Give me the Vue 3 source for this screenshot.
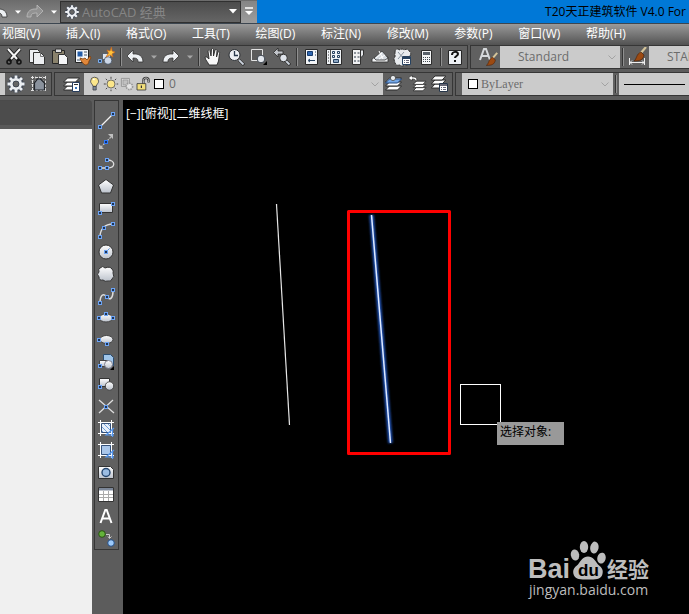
<script setup>
import { ref } from 'vue'

const menus = ['视图(V)', '插入(I)', '格式(O)', '工具(T)', '绘图(D)', '标注(N)', '修改(M)', '参数(P)', '窗口(W)', '帮助(H)']

const node = (x, y) => `<rect x="${x - 1.5}" y="${y - 1.5}" width="3" height="3" fill="#1d3557" stroke="#6da4f5"/>`
const teeth = [0, 45, 90, 135].map(a => `<path d="M10 1.500v17" transform="rotate(${a} 10 10)"/>`).join('')
const gear = `<g fill="none"><g stroke="#3a4250" stroke-width="4.600">${teeth}</g><circle cx="10" cy="10" r="5" stroke="#3a4250" stroke-width="4"/><g stroke="#eceff3" stroke-width="2.800" stroke-dasharray="3 10.500 3.500">${teeth}</g><circle cx="10" cy="10" r="4.600" stroke="#eceff3" stroke-width="3"/></g><circle cx="10" cy="10" r="3" fill="#656565" stroke="#3a4250" stroke-width=".8"/>`
const layers = '<g fill="#fff" stroke="#292929" stroke-width="1"><path d="M1.500 16l4-4h12l-4 4z"/><path d="M1.500 12l4-4h12l-4 4z"/><path d="M1.500 8l4-4h12l-4 4z"/></g>'
const brush = '<path d="M18 2l-6 7" stroke="#d4c49a" stroke-width="2.200"/><path d="M13 7l3 3c-1 5-4 6-10 6 3-2 2-7 7-9z" fill="#9c4a12" stroke="#4c240c" stroke-width=".7"/>'
const lens = '<path d="M13 13l5 5" stroke="#222" stroke-width="3"/><path d="M13 13l4.500 4.500" stroke="#cbd2dc" stroke-width="1.800"/>'

const icons = {
  gear,
  cut: '<path d="M4 2l11 12M16 2L5 14" stroke="#1f1f1f" stroke-width="4"/><path d="M4 2l9 10M16 2L7 12" stroke="#f4f4f4" stroke-width="2"/><g fill="none" stroke="#151515" stroke-width="1.600"><circle cx="5" cy="15" r="2"/><circle cx="15" cy="15" r="2"/></g>',
  copy: '<g fill="#eceef1" stroke="#333" stroke-width="1"><path d="M2.500 2.500h8l2 2v11h-10z"/><path d="M6.500 5.500h7l4 4v8h-11z"/></g><path d="M13.500 5.500v4h4" fill="none" stroke="#777"/>',
  paste: '<path d="M2.500 3.500h12v13h-12z" fill="#8a826c" stroke="#262626"/><path d="M5.500 2h6v3.500h-6z" fill="#ddd" stroke="#333"/><path d="M8.500 7.500h6l3 3v7h-9z" fill="#f4f5f7" stroke="#333"/>',
  match: '<path d="M2.500 2.500h13v13h-13z" fill="#f2f4f7" stroke="#222"/><path d="M4.500 4.500h5v5h-5z" fill="#235ca8"/><path d="M11 5h3M11 8h3M4 13h3" stroke="#456"/><path d="M7 11l3 1 2-1 2 2 3-4 1 2-2 3c0 3-2 4-4 4-2-2-4-3-5-7z" fill="#e0873a" stroke="#7b3d0b" stroke-width=".8"/>',
  block: '<path d="M6.500 6.500h8v6h-8z" fill="#dfe5ee" stroke="#384659" stroke-width=".7"/><circle cx="12" cy="13.500" r="3.800" fill="#ccd7e7" stroke="#384659" stroke-width=".7"/><path d="M2.500 12.500h3v3h-3z" fill="#24466f" stroke="#7daeee"/><path d="M15.500 0l.5 4 3 1-3 2 1 3-3-2-4 2 2.500-4-1.500-3 3 1z" fill="#ffc43c" stroke="#c8661c" stroke-width=".7"/>',
  undo: '<path d="M8 3v4c6-.5 10 2 10 8h-5c0-3-1-4-5-4v4L2 9z" fill="#edf0f3" stroke="#333" stroke-width=".8"/>',
  redo: '<path d="M12 3v4C6 6.500 2 9 2 15h5c0-3 1-4 5-4v4l6-6z" fill="#edf0f3" stroke="#333" stroke-width=".8"/>',
  redoOff: '<path d="M12 3v4C6 6.500 2 9 2 15h4c0-3 1-4 6-4v4l6-6z" fill="#929292" stroke="#bcbcbc" stroke-width=".8"/>',
  drop: '<path d="M7 8.500h6l-3 3.200z" fill="#a6a6a6"/>',
  dropOn: '<path d="M7 8.500h6l-3 3.200z" fill="#fff"/>',
  hand: '<path d="M6 18c-1-3-4-5-4-8 1-1 3 1 4 2L5 4c1-2 2-1 2 0l1 5 .5-7c1-1 2-.5 2 .5V9L12 3c1-1 2-.5 2 .5L13.500 10l1.500-5c1-1 2 0 1.500 1.500L15.500 14 14 18z" fill="#f7f7f7" stroke="#292929" stroke-width=".9"/>',
  zoomTime: lens + '<circle cx="8.500" cy="8" r="5.500" fill="#edf0f4" stroke="#2c3034"/><path d="M8.500 4v4.500H12" fill="none" stroke="#28394c" stroke-width="1.300"/>',
  zoomWin: '<path d="M2.500 2.500h11v11h-11z" fill="#5b5b5b" stroke="#e3e3e3"/><circle cx="12" cy="12" r="3.800" fill="#e2e6ec" stroke="#3e4650"/><path d="M18 14v4h-4z" fill="#000"/>',
  zoomPrev: lens + '<circle cx="11.500" cy="11" r="3.800" fill="#dfe4eb" stroke="#333"/><path d="M6 1v3h5v3H6v3L1.500 5.500z" fill="#c2c5ca" stroke="#292929" stroke-width=".8"/>',
  props: '<path d="M4.500 2.500h12v15h-12z" fill="#f3f5f7" stroke="#282828"/><path d="M6.500 4.500h5v4h-5z" fill="#2f66b0" stroke="#173b6c"/><path d="M14 5h1M14 8h1M8 13.500h6M9 12l-2 1.500L9 15" stroke="#26415f" fill="none"/>',
  center: '<path d="M2.500 2.500h15v15h-15z" fill="#eff2f5" stroke="#282828"/><path d="M6.500 3v14" stroke="#555"/><path d="M4 5h1M4 8h1M4 11h1M4 14h1" stroke="#333"/><g fill="none" stroke="#25405f"><path d="M8.500 4.500h2v2h-2zM13.500 4.500h2v2h-2zM8.500 8.500h2v2h-2zM13.500 8.500h2v2h-2z"/><path d="M9.500 12.500h5v3h-5z" fill="#8ba5c2"/></g>',
  palette: '<path d="M5.500 2.500h8v15h-8z" fill="#f0f1f3" stroke="#303030"/><path d="M13.500 3h3v5l-3 3z" fill="#e2e5e9" stroke="#303030"/><path d="M7 5h2v2H7zM7 9h2v2H7zM7 13h2v2H7zM10.500 5h2v2h-2zM10.500 9h2v2h-2zM10.500 13h2v2h-2z" fill="#8b929a"/>',
  sheet: '<path d="M2 12l3-2h13v5H2z" fill="#f0f2f4" stroke="#333" stroke-width=".8"/><path d="M4 11l8-7 6 7-3 2H6z" fill="#d4d9df" stroke="#333" stroke-width=".8"/><path d="M6 11l6-5M9 12l6-4M9 4l4 8" stroke="#fff"/>',
  markup: '<path d="M2 5q0-3 3-3l2 1q2-2 4 0 4-2 5 1 3 2 1 5v6q-2 4-5 3-3 2-5 0-5 1-5-3-2-3 0-5z" fill="#e8ebee" stroke="#333" stroke-dasharray="3 1"/><path d="M5 5l6 7M11 5l-6 7" stroke="#88939f"/><path d="M9.500 9.500h8v8h-8z" fill="#fff" stroke="#26415f"/><path d="M10 11h7" stroke="#26415f" stroke-width="2"/><path d="M11 13.500h5M11 15.500h5" stroke="#667" stroke-dasharray="1 1 3"/>',
  calc: '<path d="M5.500 3.500h10v14h-10z" fill="#f4f5f6" stroke="#2b2b2b"/><path d="M7 5h7v3H7z" fill="#59616a"/><path d="M7 10.500h7M7 12.500h7M7 14.500h7" stroke="#404850" stroke-dasharray="1 1"/>',
  help: '<path d="M3.500 3.500h13v14h-13z" fill="#edf0f4" stroke="#252525"/><path d="M7 8c0-4 6-4 6-1 0 2-3 2-3 4" fill="none" stroke="#111" stroke-width="2"/><path d="M9 13h2v2H9z" fill="#111"/>',
  textStyle: '<path d="M2 13L6 2h2l4 11M4 9h6" fill="none" stroke="#d6d9dc" stroke-width="2"/><g transform="translate(3 4) scale(.9)">' + brush + '</g>',
  dimStyle: '<g transform="translate(1 -2)">' + brush + '</g><path d="M2.500 11v7M17.500 11v7M3 15.500h14M5 13.500l-2 2 2 2M15 13.500l2 2-2 2" fill="none" stroke="#eee"/>',
  snap: '<path d="M2 3.500h16M2 16.500h16M3.500 2v16M16.500 2v16" stroke="#e2e2e2" stroke-dasharray="3 1"/><path d="M2 6.500h16M2 10.500h16M6.500 2v16M10.500 2v16M13.500 2v16" stroke="#8c8c8c" stroke-dasharray="1 1"/><path d="M5.500 16V9l3-4h3l4 4v7z" fill="#8a929d" stroke="#20242a" stroke-width="1.200"/>',
  layerProps: layers + '<path d="M10.500 8.500h7v9h-7z" fill="#fff" stroke="#273c5c"/><path d="M12 10.500h4" stroke="#333"/><path d="M13 13h2v2h-2z" fill="#3a74ba"/>',
  layerCurrent: layers + '<path d="M1.500 9l4-4h12l-4 4z" fill="#75a8e7" stroke="#284c80"/><circle cx="9" cy="4" r="2.600" fill="#e8ecf0" stroke="#333" stroke-width=".7"/>',
  layerPrev: '<g transform="translate(5 4) scale(.8)">' + layers + '</g><path d="M5 1L1.500 4 5 7V5c3 0 4 1 4 3 2-4 0-5-4-5z" fill="#fff" stroke="#292929" stroke-width=".6"/>',
  layerState: '<g transform="translate(0 -2) scale(.9 1)">' + layers + '</g><path d="M9.500 9.500h8v8h-8z" fill="#fff" stroke="#26364a"/><path d="M10 11h7" stroke="#334" stroke-width="1.500"/><path d="M11 13.500h5M11 15.500h5" stroke="#667" stroke-dasharray="1 1 3"/>',
  bulb: '<path d="M7.500 13C7 10 4.500 9.500 4.500 6.500a5 5 0 0 1 10 0C14.500 9.500 12 10 11.500 13z" fill="#fbe68a" stroke="#3d4047"/><path d="M7.500 13h4v4.500h-4z" fill="#7d8896" stroke="#3d4047"/><path d="M8 5l1-1.500" stroke="#fff" stroke-width="2"/>',
  sun: '<path d="M10 1v18M1 10h18M3.500 3.500l13 13M16.500 3.500l-13 13" stroke="#444" stroke-width="1.200" stroke-dasharray="2.500 13.500"/><circle cx="10" cy="10" r="5" fill="#fbe68a" stroke="#555"/>',
  freeze: '<path d="M3 3h10v10H3z" fill="#d6d6d6" stroke="#8b8b8b"/><path d="M5 5h6v6H5z" fill="#c1c1c1" stroke="#999"/><circle cx="13" cy="13" r="4" fill="#e4e4e4" stroke="#999" stroke-dasharray="2 1" stroke-width="2"/>',
  lock: '<path d="M10.500 10V5.500c0-4 6.500-4 6.500 0V8" fill="none" stroke="#3c3c3c" stroke-width="3"/><path d="M10.500 10V5.500c0-4 6.500-4 6.500 0v2" fill="none" stroke="#b8b8b8" stroke-width="1.200"/><path d="M2.500 9.500h11v8h-11z" fill="#f1de7b" stroke="#333"/><path d="M8 12v3" stroke="#333" stroke-width="1.500"/>',
  line: '<path d="M4 17L17 4" stroke="#f2f2f2" stroke-width="1.200"/>' + node(4, 17) + node(17, 4),
  xline: '<path d="M5 15L16 4" stroke="#bbb" stroke-width="1.300" stroke-dasharray="2 1"/><path d="M17 2v5l-5-5zM3 12v5h5z" fill="#bfbfbf"/><rect x="8.500" y="8.500" width="3" height="3" fill="#12316b" stroke="#2f7bff"/>',
  pline: '<path d="M4 14h7c9 0 9-8 0-8" fill="none" stroke="#ddd" stroke-width="1.300"/>' + node(4, 14) + node(11, 14) + node(11, 6),
  polygon: '<path d="M10 3.500l7.500 5.500-3 8h-9l-3-8z" fill="url(#metal)" stroke="#333"/>',
  rect: '<path d="M3.500 5.500h13v9h-13z" fill="url(#metal)" stroke="#333"/>' + node(4, 15) + node(17, 6),
  arc: '<path d="M4 17C4 9 9 4 17 4" fill="none" stroke="#ddd" stroke-width="1.400"/>' + node(4, 17) + node(8, 8) + node(17, 4),
  circle: '<circle cx="10" cy="10" r="7" fill="url(#metal)" stroke="#333"/><path d="M10 10l4-4" stroke="#4b8be4" stroke-dasharray="2 1"/>' + node(10, 10),
  cloud: '<path d="M4 4q3-3 5 0 5-2 7 1 2 2 1 4 2 4-1 6-1 3-4 2-3 1-5-1-4 1-4-3-3-3 0-5-1-3 1-4z" fill="url(#metal)" stroke="#333"/>',
  spline: '<path d="M4 17C4 8 8 7 11 11s6 1 6-6" fill="none" stroke="#ddd" stroke-width="1.500"/>' + node(4, 17) + node(11, 11) + node(17, 4),
  ellipse: '<ellipse cx="10" cy="10" rx="6.500" ry="4" fill="url(#metal)" stroke="#444"/>' + node(3, 10) + node(10, 6) + node(17, 10),
  ellipseArc: '<ellipse cx="10.500" cy="9.500" rx="6.500" ry="4" fill="url(#metal)" stroke="#444"/>' + node(3, 10) + node(11, 14),
  insert: '<path d="M7.500 2.500h7l3 3v8h-10z" fill="#9fc5ea" stroke="#2b4d71"/><path d="M3.500 8.500h8v6h-8z" fill="url(#metal)" stroke="#444"/><circle cx="12.500" cy="12.500" r="4" fill="url(#metal)" stroke="#667" stroke-width=".8"/><path d="M18 14v4h-4z" fill="#000"/>' + node(4, 14),
  make: '<path d="M3.500 4.500h10v8h-10z" fill="url(#metal)" stroke="#333"/><circle cx="13.500" cy="12" r="4.200" fill="url(#metal)" stroke="#333" stroke-width=".8"/>' + node(4, 13),
  point: '<path d="M3 4l15 13M17 4L3 17" stroke="#ddd" stroke-width="1.300"/>' + node(10, 11),
  hatch: '<path d="M4.500 4.500h11v11h-11z" fill="#e7effa"/><path d="M5 8l7 7M5 12l4 4M7 5l8 8M11 5l4 4" stroke="#6f9fda"/><path d="M2 4.500h16M2 15.500h16M4.500 2v16M15.500 2v16" stroke="#fff"/><path d="M5.500 5.500h9v9h-9z" fill="none" stroke="#36527a"/><path d="M18 10l-8 7h8M16.500 11v8" stroke="#5597ee" fill="none" stroke-width="1.200"/>',
  gradient: '<path d="M4.500 4.500h11v11h-11z" fill="#a9c6ea"/><path d="M2 4.500h16M2 15.500h16M4.500 2v16M15.500 2v16" stroke="#fff"/><path d="M5.500 5.500h9v9h-9z" fill="none" stroke="#36527a"/><path d="M18 10l-8 7h8M16.500 11v8" stroke="#5597ee" fill="none" stroke-width="1.200"/>',
  region: '<path d="M2.500 4.500h12l3 3v9h-15z" fill="url(#metal)" stroke="#333"/><circle cx="10" cy="10.500" r="4" fill="#9bbce2" stroke="#25466f" stroke-width="1.400"/>',
  table: '<path d="M2.500 3.500h15v14h-15z" fill="#fff" stroke="#333"/><path d="M3 4h14v2.500H3z" fill="#7c8798"/><path d="M3 10.500h14M3 13.500h14M7.500 7v10M12.500 7v10" stroke="#aaa"/>',
  mtext: '<path d="M4.500 17L9.300 4h1.400l4.800 13M6.500 12.500h7" fill="none" stroke="#fff" stroke-width="2"/>',
  addSel: '<circle cx="6" cy="6" r="3.300" fill="#64b33a" stroke="#285311"/><circle cx="15" cy="15" r="3.300" fill="#9cc9fa" stroke="#234c82"/><path d="M10 6.500h3.500V10M12 8.500l1.500 2 2-2" fill="none" stroke="#ccc"/>'
}

const standardTools = [
  ['cut', '剪切'], ['copy', '复制'], ['paste', '粘贴'], ['match', '特性匹配'], ['block', '块编辑器'], ['sep'],
  ['undo', '放弃'], ['drop', '放弃列表'], ['redo', '重做'], ['drop', '重做列表'], ['sep'],
  ['hand', '平移'], ['zoomTime', '实时缩放'], ['zoomWin', '窗口缩放'], ['zoomPrev', '缩放上一个'], ['sep'],
  ['props', '特性'], ['center', '设计中心'], ['palette', '工具选项板'], ['sheet', '图纸集'], ['markup', '标记集'], ['calc', '计算器'], ['sep'],
  ['help', '帮助']
]

const drawTools = [
  ['line', '直线'], ['xline', '构造线'], ['pline', '多段线'], ['polygon', '多边形'], ['rect', '矩形'], ['arc', '圆弧'],
  ['circle', '圆'], ['cloud', '修订云线'], ['spline', '样条曲线'], ['ellipse', '椭圆'], ['ellipseArc', '椭圆弧'],
  ['insert', '插入块'], ['make', '创建块'], ['point', '点'], ['hatch', '图案填充'], ['gradient', '渐变色'],
  ['region', '面域'], ['table', '表格'], ['mtext', '多行文字'], ['addSel', '添加选定对象']
]

const workspace = ref('AutoCAD 经典')
const layer = ref('0')
const textStyle = ref('Standard')
const dimStyle = ref('STANDARD')
const color = ref('ByLayer')
</script>

<template>
  <div class="app">
    <svg class="defs" aria-hidden="true">
      <linearGradient id="metal" x1="0" y1="0" x2="0" y2="1">
        <stop offset="0" stop-color="#fff" />
        <stop offset="1" stop-color="#bcc2cc" />
      </linearGradient>
    </svg>

    <header class="title">
      <div class="quick">
        <button class="tool half" aria-label="放弃"><svg viewBox="0 0 20 20" v-html="icons.undo" /></button>
        <button class="tool narrow" aria-label="放弃列表"><svg viewBox="0 0 20 20" v-html="icons.dropOn" /></button>
        <button class="tool" aria-label="重做"><svg viewBox="0 0 20 20" v-html="icons.redoOff" /></button>
        <button class="tool narrow" aria-label="重做列表"><svg viewBox="0 0 20 20" v-html="icons.dropOn" /></button>
        <div class="workspace">
          <svg class="icon" viewBox="0 0 20 20" v-html="icons.gear" />
          <select v-model="workspace" aria-label="工作空间"><option>AutoCAD 经典</option></select>
          <svg class="arrow" viewBox="0 0 8 5"><path d="M0 0h8L4 4.500z" fill="#fff" /></svg>
        </div>
        <button class="more" aria-label="自定义">
          <svg viewBox="0 0 10 9"><path d="M1 1h8" stroke="#fff" stroke-width="1.500" /><path d="M1 4h8L5 8z" fill="#fff" /></svg>
        </button>
      </div>
      <h1>T20天正建筑软件 V4.0 For</h1>
    </header>

    <nav class="menu">
      <div class="menu-list">
        <button v-for="m in menus" :key="m">{{ m }}</button>
      </div>
    </nav>

    <div class="bars">
      <div class="row">
        <div class="bar standard">
          <template v-for="([name, label], i) in standardTools" :key="i">
            <span v-if="name === 'sep'" class="sep"></span>
            <button v-else class="tool" :class="{ narrow: name === 'drop' }" :aria-label="label">
              <svg viewBox="0 0 20 20" v-html="icons[name]" />
            </button>
          </template>
        </div>
        <div class="bar styles">
          <button class="tool" aria-label="文字样式"><svg viewBox="0 0 20 20" v-html="icons.textStyle" /></button>
          <div class="combo text-combo">
            <select v-model="textStyle" aria-label="文字样式列表"><option>Standard</option></select>
            <svg class="chevron" viewBox="0 0 8 5"><path d="M.5 .5L4 4L7.500 .5" /></svg>
          </div>
          <span class="sep"></span>
          <button class="tool" aria-label="标注样式"><svg viewBox="0 0 20 20" v-html="icons.dimStyle" /></button>
          <div class="combo dim-combo">
            <select v-model="dimStyle" aria-label="标注样式列表"><option>STANDARD</option></select>
          </div>
        </div>
      </div>

      <div class="row">
        <div class="bar spaces">
          <div class="combo stub"></div>
          <button class="tool" aria-label="工作空间设置"><svg viewBox="0 0 20 20" v-html="icons.gear" /></button>
          <button class="tool" aria-label="我的工作空间"><svg viewBox="0 0 20 20" v-html="icons.snap" /></button>
        </div>
        <div class="bar layer-bar">
          <button class="tool" aria-label="图层特性"><svg viewBox="0 0 20 20" v-html="icons.layerProps" /></button>
          <div class="combo layer-combo">
            <svg v-for="n in ['bulb', 'sun', 'freeze', 'lock']" :key="n" class="mini" viewBox="0 0 20 20" v-html="icons[n]" />
            <span class="swatch"></span>
            <select v-model="layer" aria-label="图层"><option>0</option></select>
            <svg class="chevron" viewBox="0 0 8 5"><path d="M.5 .5L4 4L7.500 .5" /></svg>
          </div>
          <button class="tool" aria-label="置为当前图层"><svg viewBox="0 0 20 20" v-html="icons.layerCurrent" /></button>
          <button class="tool" aria-label="上一个图层"><svg viewBox="0 0 20 20" v-html="icons.layerPrev" /></button>
          <button class="tool" aria-label="图层状态"><svg viewBox="0 0 20 20" v-html="icons.layerState" /></button>
        </div>
        <div class="bar prop-bar">
          <div class="combo color-combo">
            <span class="swatch"></span>
            <select v-model="color" aria-label="颜色"><option>ByLayer</option></select>
            <svg class="chevron" viewBox="0 0 8 5"><path d="M.5 .5L4 4L7.500 .5" /></svg>
          </div>
          <span class="sep"></span>
          <button class="combo linetype" aria-label="线型"><span></span></button>
        </div>
      </div>
    </div>

    <div class="work">
      <aside class="panel"><div class="panel-head"></div><div class="panel-body"></div></aside>
      <div class="rail">
        <div class="draw">
          <button v-for="[name, label] in drawTools" :key="name" class="tool" :aria-label="label">
            <svg viewBox="0 0 20 20" v-html="icons[name]" />
          </button>
        </div>
      </div>
      <main class="canvas">
        <p class="view">[−][俯视][二维线框]</p>
        <svg class="drawing" width="566" height="514" viewBox="123 100 566 514">
          <defs>
            <filter id="glow" x="-100%" width="300%"><feGaussianBlur stdDeviation="0.9" /></filter>
          </defs>
          <path d="M276.500 204L289.500 425" stroke="#e6e6e6" stroke-width="1.200" />
          <path d="M371.500 215L390.500 443" stroke="#2354b8" stroke-width="4.500" filter="url(#glow)" />
          <path d="M371.500 215L390.500 443" stroke="#dfeaff" stroke-width="1.500" />
          <rect x="348.500" y="211.500" width="101" height="242" fill="none" stroke="#f00" stroke-width="3" stroke-linejoin="round" />
          <rect x="460.500" y="384.500" width="40" height="40" fill="none" stroke="#fff" />
        </svg>
        <div class="tip">选择对象:</div>
        <svg class="mark" width="130" height="66" viewBox="526 536 130 66">
          <g fill="#bdbdbd">
            <text x="528" y="578" class="latin">Bai</text>
            <ellipse cx="575" cy="555" rx="4.200" ry="5.500" transform="rotate(-12 575 555)" />
            <ellipse cx="584" cy="547" rx="4.200" ry="6" />
            <ellipse cx="594.500" cy="547.500" rx="4.200" ry="6" transform="rotate(10 594 547)" />
            <ellipse cx="601.500" cy="558" rx="4.200" ry="5.500" transform="rotate(15 601 558)" />
            <path d="M588 556.500c5 0 7 4 10 8 4 3 6 6 4 11-2 4-6 4-14 4s-12 0-14-4c-2-5 0-8 4-11 3-4 5-8 10-8z" />
            <text x="607" y="577" class="cjk">经验</text>
            <text x="529" y="595" class="url">jingyan.baidu.com</text>
          </g>
          <text x="578" y="576" class="du">du</text>
        </svg>
      </main>
    </div>
  </div>
</template>

<style>
body {
  margin: 0;
  background: #5c5c5c;
}
</style>

<style scoped>
.app {
  display: flex;
  flex-direction: column;
  min-height: 100vh;
  overflow: hidden;
  background: #5c5c5c;
  font: 12px/16px "Open Sans", "Noto Sans CJK SC", sans-serif;
}
.app * {
  box-sizing: border-box;
}
.defs {
  position: absolute;
  width: 0;
  height: 0;
}
button,
select {
  margin: 0;
  padding: 0;
  border: 0;
  background: none;
  color: inherit;
  font: inherit;
  appearance: none;
}
select {
  flex: 1;
  min-width: 0;
  height: 100%;
}
svg {
  display: block;
  flex: none;
}
.title {
  display: flex;
  justify-content: space-between;
  height: 24px;
  background: #0078d7;
  border-bottom: 1px solid #3c4650;
}
.quick {
  display: flex;
  align-items: center;
  background: linear-gradient(#6c6c6c, #8e8e8e);
}
.tool {
  display: flex;
  align-items: center;
  flex: none;
  width: 23px;
  height: 22px;
  padding-left: 1px;
}
.tool svg {
  width: 20px;
  height: 20px;
}
.tool.narrow {
  justify-content: center;
  width: 13px;
  padding: 0;
  overflow: hidden;
}
.tool.half {
  justify-content: flex-end;
  width: 11px;
  padding-right: 2px;
  overflow: hidden;
}
.workspace {
  display: flex;
  align-items: center;
  width: 181px;
  height: 22px;
  padding: 0 3px;
  gap: 2px;
  border: 1px solid #303030;
  background: linear-gradient(#4c4c4c, #656565);
  color: #858585;
  font-size: 13px;
}
.workspace .icon {
  width: 16px;
  height: 16px;
}
.arrow {
  width: 8px;
  height: 5px;
}
.more {
  width: 16px;
  height: 22px;
  padding: 0 3px;
  background: linear-gradient(#858585, #9d9d9d);
}
h1 {
  margin: 0;
  padding-right: 3px;
  font-size: 12px;
  font-weight: 400;
  line-height: 24px;
  white-space: nowrap;
  color: #000;
}
.menu {
  height: 21px;
  padding-left: 2px;
  background: linear-gradient(#9a9a9a, #525252);
  color: #fff;
}
.menu-list {
  display: flex;
  justify-content: space-between;
  max-width: 624px;
}
.menu button {
  flex: none;
  line-height: 20px;
  white-space: nowrap;
}
.bars {
  display: flex;
  flex-direction: column;
  gap: 3px;
  padding-bottom: 4px;
}
.row {
  display: flex;
  gap: 2px;
  height: 24px;
}
.bar {
  display: flex;
  align-items: center;
  flex: none;
  border: 1px solid #363636;
  background: #606060;
}
.sep {
  flex: none;
  width: 6px;
  height: 18px;
  background: linear-gradient(90deg, transparent 2px, #353535 2px 3px, #909090 3px 4px, transparent 4px);
}
.standard {
  padding-left: 3px;
  border-left: 0;
}
.styles,
.prop-bar {
  flex: 1;
  min-width: 0;
  border-right: 0;
}
.styles {
  padding-left: 6px;
}
.combo {
  display: flex;
  align-items: center;
  height: 22px;
  background: #cbcbcb;
  color: #6c6c6c;
}
.chevron {
  width: 8px;
  height: 5px;
  margin-right: 4px;
  fill: none;
  stroke: #a3a3a3;
}
.text-combo {
  width: 120px;
  padding-left: 18px;
}
.dim-combo {
  flex: 1;
  padding-left: 18px;
  overflow: hidden;
}
.dim-combo select {
  flex: none;
}
.stub {
  width: 5px;
}
.spaces {
  border-left: 0;
}
.layer-bar {
  padding-left: 6px;
  flex: 0 1 399px;
}
.layer-combo {
  flex: 1;
  padding-left: 3px;
}
.mini {
  width: 16px;
  height: 16px;
}
.swatch {
  flex: none;
  width: 10px;
  height: 10px;
  margin: 0 5px;
  border: 1px solid #000;
  background: #fff;
}
.layer-combo .swatch {
  margin-left: 3px;
}
.prop-bar {
  padding-left: 6px;
}
.color-combo {
  width: 151px;
  padding-left: 1px;
  font: 12px/16px "Liberation Serif", serif;
}
.color-combo .swatch {
  margin-right: 3px;
}
.linetype {
  flex: 1;
  padding: 0 0 0 5px;
}
.linetype span {
  flex: 1;
  height: 1px;
  margin-right: 4px;
  background: #000;
}
.work {
  display: flex;
  flex: 1;
}
.panel {
  display: flex;
  flex-direction: column;
  width: 92px;
}
.panel-head {
  height: 29px;
  border-top: 1px solid #4a4a4a;
  border-bottom: 4px solid #595959;
  border-radius: 0 4px 0 0;
  background: #4c4c4c;
}
.panel-body {
  flex: 1;
  background: #f0f0f0;
}
.rail {
  width: 31px;
  padding-left: 2px;
}
.draw {
  width: 25px;
  padding-top: 8px;
  border: 1px solid #363636;
  background: #606060;
}
.canvas {
  position: relative;
  flex: 1;
  min-width: 0;
  background: #000;
}
.view {
  margin: 0;
  padding: 6px 3px;
  color: #fff;
  font-size: 12px;
  white-space: nowrap;
}
.drawing {
  position: absolute;
  left: 0;
  top: 0;
}
.tip {
  position: absolute;
  left: 374px;
  top: 322px;
  padding: 2px 13px 5px 3px;
  background: #999;
  color: #000;
  white-space: nowrap;
}
.mark {
  position: absolute;
  right: 33px;
  bottom: 12px;
}
.latin {
  font: bold 27px "Liberation Sans", sans-serif;
}
.cjk {
  font: bold 21px "Noto Sans CJK SC", sans-serif;
}
.url {
  font: 14px "Open Sans", sans-serif;
}
.du {
  fill: #000;
  font: bold 17px "Liberation Sans", sans-serif;
}
</style>
